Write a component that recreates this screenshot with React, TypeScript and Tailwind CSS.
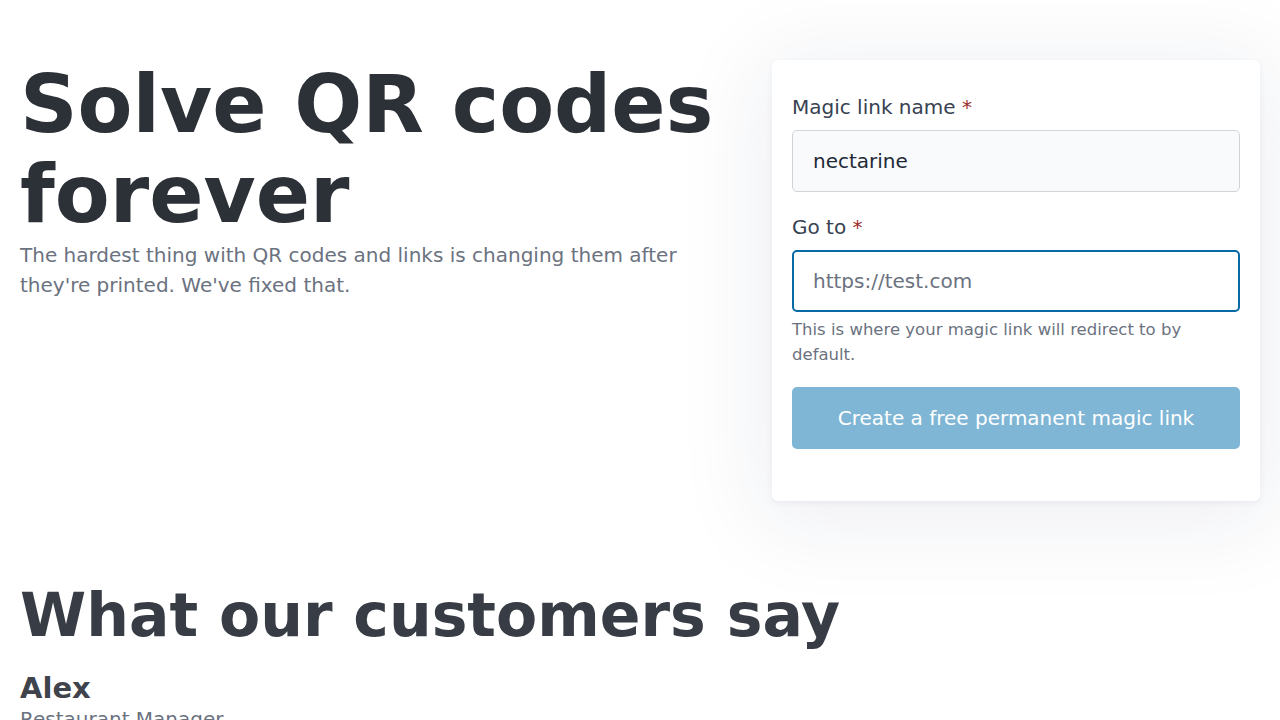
export default function App() {
  return (
    <div className="min-h-screen bg-white font-['DejaVu_Sans',sans-serif]">
      <div className="flex items-start gap-8 px-5 pt-[60px]">
        <div className="flex-1">
          <h1 className="text-[80px] leading-[90px] font-bold text-[#2c3037]">
            Solve QR codes forever
          </h1>
          <p className="text-[20px] leading-[30px] text-[#6b7280]">
            The hardest thing with QR codes and links is changing them after they're printed. We've fixed that.
          </p>
        </div>

        <form className="w-[488px] shrink-0 rounded-md bg-white px-5 pt-8 pb-[52px] shadow-[0_2px_6px_rgba(30,41,82,0.06),0_12px_90px_14px_rgba(30,41,82,0.07)]">
          <label className="block text-[20px] leading-[30px] text-[#374151]">
            Magic link name <span className="text-[#9b2c2c]">*</span>
          </label>
          <input
            defaultValue="nectarine"
            className="mt-2 block h-[62px] w-full rounded-[5px] border border-[#d1d5db] bg-[#f9fafb] px-5 text-[20px] text-[#1f2937] outline-none"
          />

          <label className="mt-5 block text-[20px] leading-[30px] text-[#374151]">
            Go to <span className="text-[#9b2c2c]">*</span>
          </label>
          <input
            placeholder="https://test.com"
            className="mt-2 block h-[62px] w-full rounded-[5px] border-2 border-[#0769a6] bg-white px-[19px] text-[20px] text-[#1f2937] outline-none placeholder:text-[#6b7280]"
          />
          <p className="mt-[5px] text-[16.5px] leading-[25px] text-[#6b7280]">
            This is where your magic link will redirect to by default.
          </p>

          <button
            type="button"
            className="mt-5 block h-[62px] w-full rounded-[5px] bg-[#80b6d5] text-[20px] text-white"
          >
            Create a free permanent magic link
          </button>
        </form>
      </div>

      <div className="px-5 pt-[84px]">
        <h2 className="text-[60px] leading-[60px] font-bold text-[#373c45]">What our customers say</h2>
        <h3 className="mt-[27px] text-[29px] leading-[32px] font-bold text-[#3f434b]">Alex</h3>
        <p className="text-[20px] leading-[30px] text-[#6b7280]">Restaurant Manager</p>
      </div>
    </div>
  );
}
